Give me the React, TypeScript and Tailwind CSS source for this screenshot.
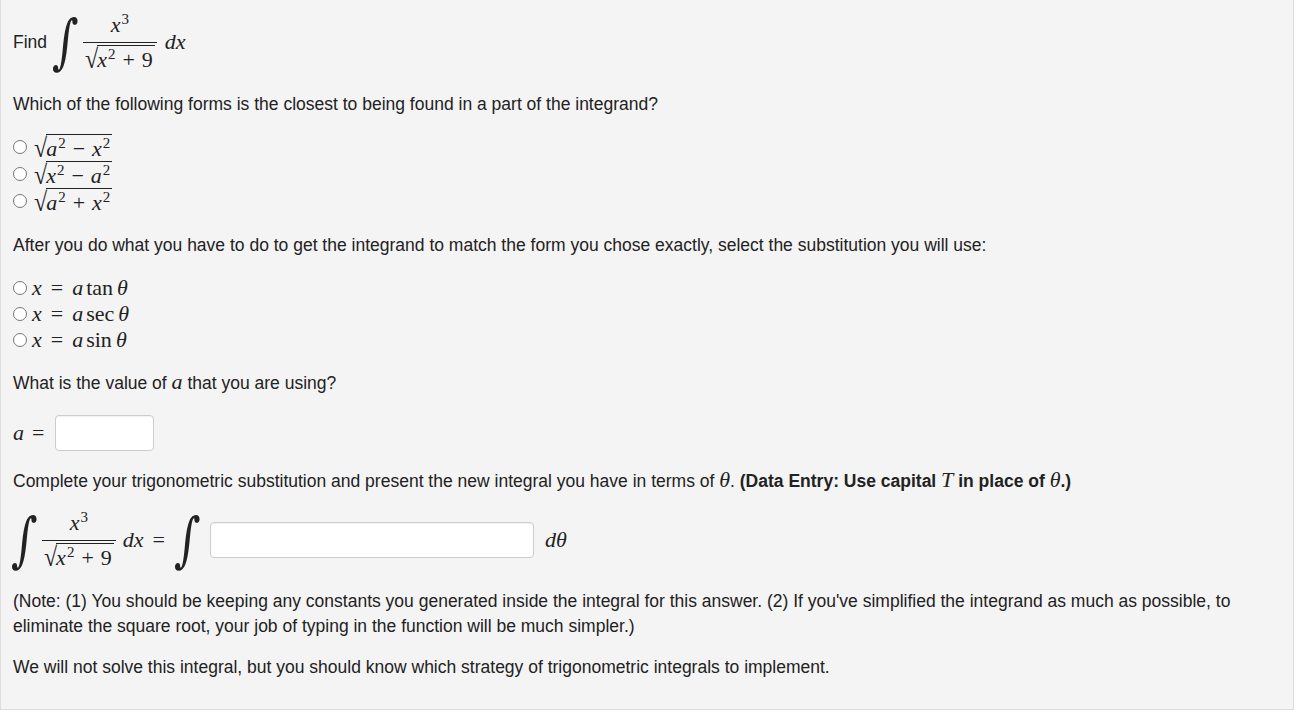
import React from 'react';

const math = "font-['Liberation_Serif','DejaVu_Serif',serif] text-[22px] leading-none";
const inlineMath = "font-['Liberation_Serif','DejaVu_Serif',serif] text-[22px] leading-[0] italic";

function V({ children }: { children: React.ReactNode }) {
  return <span className="italic">{children}</span>;
}

function Sup({ children }: { children: React.ReactNode }) {
  return <span className="relative -top-[8px] text-[15px] ml-[1px]">{children}</span>;
}

function Op({ children }: { children: React.ReactNode }) {
  return <span className="mx-[7px]">{children}</span>;
}

function Sqrt({ children }: { children: React.ReactNode }) {
  return (
    <span className="inline-flex items-end">
      <span className="text-[24px] leading-none translate-y-[1px] -mr-[1px] origin-bottom scale-y-[1.12]">√</span>
      <span className="border-t border-[#222] pt-[3px] pr-[2px] leading-none">{children}</span>
    </span>
  );
}

function Integral() {
  return (
    <span className="font-['DejaVu_Serif',serif] text-[44px] leading-none inline-block scale-y-[1.35] -skew-x-6">∫</span>
  );
}

function Frac() {
  return (
    <span className="inline-flex flex-col items-center">
      <span className="pb-[6px]">
        <V>x</V>
        <Sup>3</Sup>
      </span>
      <span className="h-px w-full bg-[#222]" />
      <span className="pt-[2px] px-[2px]">
        <Sqrt>
          <V>x</V>
          <Sup>2</Sup>
          <Op>+</Op>9
        </Sqrt>
      </span>
    </span>
  );
}

function Radio() {
  return <span className="inline-block w-[14px] h-[14px] rounded-full border border-[#767676] bg-white shrink-0" />;
}

export default function App() {
  return (
    <div className="w-[1294px] h-[710px] bg-[#f4f4f4] border-l border-r border-b border-[#dcdcdc] pl-[12px] pr-[12px] text-[17.5px] text-[#222] font-['Liberation_Sans',Arial,sans-serif]">
      <div className="flex items-center h-[58px] pt-[13px] box-content">
        <span>Find</span>
        <span className={`${math} ml-[7px] mr-[6px]`}><Integral /></span>
        <span className={math}><Frac /></span>
        <span className={`${math} ml-[8px]`}><V>dx</V></span>
      </div>

      <p className="mt-[23px] leading-[20px]">
        Which of the following forms is the closest to being found in a part of the integrand?
      </p>

      <div className="mt-[19px] flex flex-col">
        {[
          ['a', 'x', '−'],
          ['x', 'a', '−'],
          ['a', 'x', '+'],
        ].map(([p, q, o], i) => (
          <label key={i} className="flex items-center h-[27px] gap-[7px]">
            <Radio />
            <span className={math}>
              <Sqrt>
                <V>{p}</V>
                <Sup>2</Sup>
                <Op>{o}</Op>
                <V>{q}</V>
                <Sup>2</Sup>
              </Sqrt>
            </span>
          </label>
        ))}
      </div>

      <p className="mt-[21px] leading-[20px]">
        After you do what you have to do to get the integrand to match the form you chose exactly, select the substitution you will use:
      </p>

      <div className="mt-[20px] flex flex-col">
        {['tan', 'sec', 'sin'].map((f) => (
          <label key={f} className="flex items-center h-[26px] gap-[5px]">
            <Radio />
            <span className={math}>
              <V>x</V>
              <span className="mx-[9px]">=</span>
              <V>a</V>
              <span className="ml-[3px]">{f}</span>
              <span className="ml-[4px]"><V>θ</V></span>
            </span>
          </label>
        ))}
      </div>

      <p className="mt-[20px] leading-[20px]">
        What is the value of <span className={inlineMath}>a</span> that you are using?
      </p>

      <div className="mt-[22px] flex items-center h-[36px]">
        <span className={math}>
          <V>a</V>
          <span className="mx-[8px]">=</span>
        </span>
        <span className="ml-[3px] w-[99px] h-[36px] bg-white border border-[#ccc] rounded-[4px] shadow-[inset_0_1px_1px_rgba(0,0,0,0.06)]" />
      </div>

      <p className="mt-[20px] leading-[20px]">
        Complete your trigonometric substitution and present the new integral you have in terms of{' '}
        <span className={inlineMath}>θ</span>.{' '}
        <b>
          (Data Entry: Use capital <span className={`${inlineMath} font-normal`}>T</span> in place of{' '}
          <span className={`${inlineMath} font-normal`}>θ</span>.)
        </b>
      </p>

      <div className="mt-[20px] flex items-center h-[58px]">
        <span className={`${math} mr-[6px]`}><Integral /></span>
        <span className={math}><Frac /></span>
        <span className={`${math} ml-[7px]`}>
          <V>dx</V>
          <span className="mx-[9px]">=</span>
        </span>
        <span className={`${math} ml-[2px]`}><Integral /></span>
        <span className="ml-[11px] w-[324px] h-[36px] bg-white border border-[#ccc] rounded-[4px] shadow-[inset_0_1px_1px_rgba(0,0,0,0.06)]" />
        <span className={`${math} ml-[11px]`}>
          <V>dθ</V>
        </span>
      </div>

      <p className="mt-[20px] leading-[25px]">
        (Note: (1) You should be keeping any constants you generated inside the integral for this answer. (2) If you've simplified the integrand as much as possible, to eliminate the square root, your job of typing in the function will be much simpler.)
      </p>

      <p className="mt-[16px] leading-[25px]">
        We will not solve this integral, but you should know which strategy of trigonometric integrals to implement.
      </p>
    </div>
  );
}
